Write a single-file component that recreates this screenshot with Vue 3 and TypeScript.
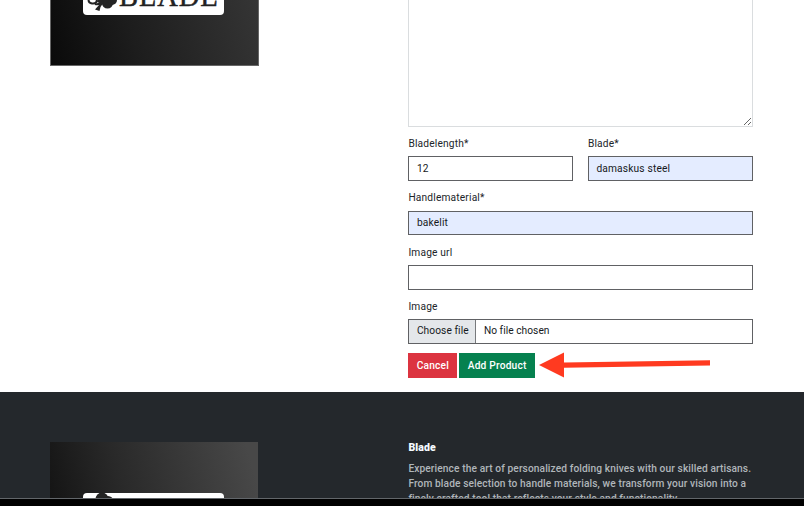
<script setup lang="ts">
import { ref } from 'vue'

const description = ref<string>('')
const bladeLength = ref<string>('12')
const blade = ref<string>('damaskus steel')
const handle = ref<string>('bakelit')
const imageUrl = ref<string>('')
const about: string[] = [
  'Experience the art of personalized folding knives with our skilled artisans.',
  'From blade selection to handle materials, we transform your vision into a',
  'finely crafted tool that reflects your style and functionality.',
]
</script>

<template>
  <div class="page">
    <main class="main">
      <div class="picture">
        <div class="plate">
          <svg class="clover" viewBox="0 0 32 28" width="32" height="28">
            <circle cx="14" cy="7" r="7" />
            <circle cx="20.500" cy="18" r="5.600" />
            <circle cx="25" cy="15" r="5" />
            <path d="M12 10 25 12 18 20 10 17Z" />
            <path class="curl" d="M5 13C0 14 1 18 5 18.500C9 19 11 16 9 13" />
            <path class="curl" d="M8 19C12 20 15 18 17 16" />
            <path d="M14 16 17 17 13.500 22 12.500 26 8 24.500 12 20Z" />
          </svg>
          <span class="wordmark">BLADE</span>
        </div>
      </div>
      <form class="form" @submit.prevent>
        <textarea v-model="description" class="area"></textarea>
        <div class="pair">
          <div class="field">
            <label>Bladelength*</label>
            <input v-model="bladeLength" class="control" />
          </div>
          <div class="field">
            <label>Blade*</label>
            <input v-model="blade" class="control filled" />
          </div>
        </div>
        <div class="field">
          <label>Handlematerial*</label>
          <input v-model="handle" class="control filled" />
        </div>
        <div class="field">
          <label>Image url</label>
          <input v-model="imageUrl" class="control" />
        </div>
        <div class="field">
          <label>Image</label>
          <div class="control file">
            <span class="choose">Choose file</span>
            <span class="chosen">No file chosen</span>
          </div>
        </div>
        <div class="actions">
          <button class="btn cancel" type="button">Cancel</button>
          <button class="btn add" type="submit">Add Product</button>
          <svg class="arrow" viewBox="0 0 174 26" width="174" height="26">
            <path d="M1 13 26 .500V10.600L172 8.300V13.500L26 15.700V25.500Z" />
          </svg>
        </div>
      </form>
    </main>
    <footer class="footer">
      <div class="picture low">
        <div class="plate">
          <svg class="clover" viewBox="0 0 32 28" width="32" height="28">
            <circle cx="9" cy="7" r="6.500" />
            <circle cx="15" cy="9.500" r="5.500" />
          </svg>
        </div>
      </div>
      <section class="about">
        <h2>Blade</h2>
        <p><span v-for="line in about" :key="line">{{ line }}</span></p>
      </section>
    </footer>
    <div class="edge"></div>
  </div>
</template>

<style>
body { background: #fff; overflow: hidden; }
</style>

<style scoped>
* { box-sizing: border-box; }
.page {
  display: flex;
  flex-direction: column;
  width: 804px;
  height: 506px;
  overflow: hidden;
  font-family: Roboto, "Liberation Sans", sans-serif;
  font-size: 10.200px;
  letter-spacing: .17px;
  color: #212529;
}
.main, .footer {
  display: grid;
  grid-template-columns: 358.400px 344.600px;
  padding-left: 50px;
  overflow: hidden;
}
.main { height: 392px; flex: none; }
.picture {
  width: 209px;
  height: 66px;
  border: 1px solid #666;
  border-top: 0;
  background: linear-gradient(75deg, #0a0a0a, #1d1d1d 40%, #353535);
  overflow: hidden;
}
.plate {
  display: flex;
  align-items: flex-end;
  width: 141px;
  height: 35px;
  margin: -20px 0 0 32px;
  padding: 0 4px 2px;
  border-radius: 4px;
  background: #fff;
}
.clover { flex: none; fill: #242424; }
.curl { fill: none; stroke: #242424; stroke-width: 2; }
.wordmark {
  margin-bottom: -1px;
  font: 28.500px/34px "Liberation Serif", serif;
  color: #222;
  -webkit-text-stroke: .45px #222;
  letter-spacing: .9px;
}
.picture.low {
  width: 208px;
  height: 120px;
  border: 0;
  background: linear-gradient(75deg, #101010, #292929 38%, #484848 95%);
}
.low .plate { margin: 51px 0 0 33px; padding: 0 10px; align-items: flex-start; }
.low .clover { margin-top: -1px; }
.form { display: flex; flex-direction: column; }
.area {
  display: block;
  width: 100%;
  height: 127px;
  margin: 0 0 9px;
  border: 1px solid #dadddf;
  border-top: 0;
  background: #fff;
  resize: vertical;
  outline: 0;
}
.pair { display: grid; grid-template-columns: 1fr 1fr; gap: 14.400px; }
.field { height: 54.330px; }
.field label {
  display: block;
  height: 20.200px;
  line-height: 16px;
}
.control {
  display: block;
  width: 100%;
  height: 24.800px;
  padding: 0 7.500px;
  border: 1px solid #606164;
  border-radius: 0;
  background: #fff;
  color: #16191c;
  font: inherit;
  letter-spacing: inherit;
  outline: 0;
}
.filled { background: #e4ecff; }
.file { display: flex; align-items: stretch; padding: 0; line-height: 22px; }
.choose {
  width: 67px;
  padding-left: 7.500px;
  border-right: 1px solid #77797c;
  background: #e4e7ea;
  letter-spacing: .08px;
  white-space: nowrap;
}
.chosen { padding-left: 7.500px; letter-spacing: .04px; }
.actions { display: flex; }
.btn {
  height: 24.500px;
  padding: 0 0 1px;
  border: 0;
  color: #fff;
  font: 500 10.200px Roboto, sans-serif;
  letter-spacing: .2px;
}
.cancel { width: 49px; margin-right: 2px; background: #dc3440; }
.add { width: 75.500px; background: #06814f; }
.arrow { margin: -1px 0 0 3px; fill: #ff3a20; }
.footer { height: 106px; padding-top: 50px; background: #24282c; flex: none; }
.about { color: #b0b6ba; font-weight: 500; letter-spacing: .1px; }
.about h2 {
  margin: -3px 0 5px;
  font-size: 10.500px;
  line-height: 17px;
  font-weight: 900;
  color: #f5fbff;
}
.about p { margin: 0; }
.about span { display: block; line-height: 15.200px; white-space: nowrap; }
.edge { height: 8px; border-top: 1px solid #62666a; background: #000; }
</style>
